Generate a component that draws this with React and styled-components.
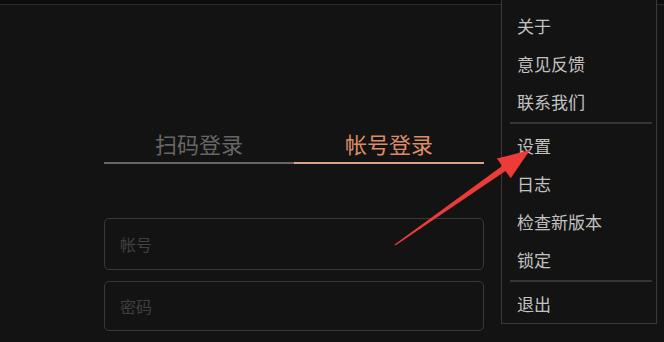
import React from "react";
import styled, { createGlobalStyle } from "styled-components";

const GlobalStyle = createGlobalStyle`
  html, body {
    margin: 0;
    padding: 0;
    background: #131313;
  }
  body {
    font-family: "Noto Sans CJK SC", "Noto Sans", sans-serif;
  }
`;

const menuGroups = [
  ["关于", "意见反馈", "联系我们"],
  ["设置", "日志", "检查新版本", "锁定"],
  ["退出"],
];

const App = () => {
  return (
    <>
      <GlobalStyle />
      <Page>
        {/* TOP EDGE */}
        <TopBar>
          <TopMark />
        </TopBar>
        {/* LOGIN PANEL */}
        <Main>
          <Panel>
            <Tabs>
              <Tab>扫码登录</Tab>
              <Tab active>帐号登录</Tab>
            </Tabs>
            <Fields>
              <Field tall>
                <Placeholder>帐号</Placeholder>
              </Field>
              <Field>
                <Placeholder>密码</Placeholder>
              </Field>
            </Fields>
          </Panel>
        </Main>
        {/* DROPDOWN MENU */}
        <Menu>
          {menuGroups.map((group, i) => (
            <React.Fragment key={i}>
              {i > 0 && <Divider />}
              {group.map((item) => (
                <MenuItem key={item}>{item}</MenuItem>
              ))}
            </React.Fragment>
          ))}
        </Menu>
        {/* RED ARROW ANNOTATION */}
        <Arrow viewBox="0 0 664 342" width="664" height="342">
          <polygon
            fill="#ec3b38"
            points="394.6,244.4 395.4,245.6 505.5,170.9 510.7,178.2 530,150 496.9,158.6 502.1,165.9"
          />
        </Arrow>
      </Page>
    </>
  );
};

export default App;

const Page = styled.div`
  position: relative;
  width: 664px;
  height: 342px;
  overflow: hidden;
  background: #131313;
`;

const TopBar = styled.div`
  display: flex;
  height: 4px;
  padding-left: 543px;
  background: #0d0d0d;
  border-bottom: 1px solid #2b2b2b;
`;

const TopMark = styled.div`
  width: 52px;
  height: 3px;
  margin-top: 1px;
  background: #4a4a4a;
`;

const Main = styled.div`
  display: flex;
  padding-left: 104px;
  padding-top: 123px;
`;

const Panel = styled.div`
  display: flex;
  flex-direction: column;
  width: 380px;
`;

const Tabs = styled.div`
  display: flex;
`;

const Tab = styled.div`
  flex: 1;
  text-align: center;
  font-size: 22px;
  line-height: 30px;
  padding-bottom: 4px;
  color: ${(p) => (p.active ? "#dd8d68" : "#666666")};
  border-bottom: 2px solid ${(p) => (p.active ? "#dba283" : "#686868")};
`;

const Fields = styled.div`
  display: flex;
  flex-direction: column;
  gap: 11px;
  margin-top: 54px;
`;

const Field = styled.div`
  display: flex;
  align-items: center;
  box-sizing: border-box;
  height: ${(p) => (p.tall ? "52px" : "50px")};
  padding-left: 15px;
  border: 1.5px solid #383838;
  border-radius: 5px;
`;

const Placeholder = styled.span`
  font-size: 16px;
  color: #404040;
`;

const Menu = styled.div`
  position: absolute;
  top: 0;
  left: 501px;
  width: 156px;
  box-sizing: border-box;
  padding: 6px 0 1px;
  background: #131313;
  border: 1px solid #3a3a3a;
  border-top: none;
  display: flex;
  flex-direction: column;
`;

const MenuItem = styled.div`
  display: flex;
  align-items: center;
  height: 38px;
  padding-left: 15px;
  font-size: 17px;
  color: #c2c2c2;
`;

const Divider = styled.div`
  height: 2px;
  margin: 2px 4px 2px 8px;
  background: #353535;
`;

const Arrow = styled.svg`
  position: absolute;
  top: 0;
  left: 0;
  pointer-events: none;
`;
